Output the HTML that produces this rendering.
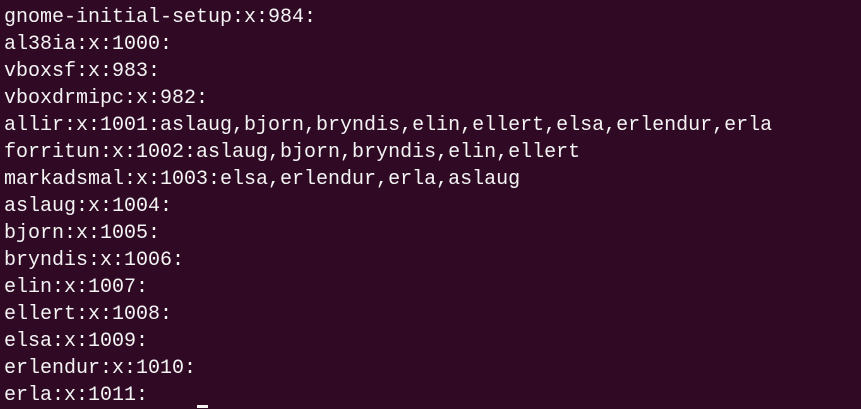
<html><head><style>
body{margin:0;width:861px;height:408px;background:#300a24;overflow:hidden}
pre{margin:0;padding:4px 0 0 4px;font-family:"Liberation Mono",monospace;font-size:20px;line-height:27px;color:#f4f4f4}
.c{position:absolute;left:197px;top:405px;width:11px;height:3px;background:#f4f4f4}
</style></head><body><pre>gnome-initial-setup:x:984:
al38ia:x:1000:
vboxsf:x:983:
vboxdrmipc:x:982:
allir:x:1001:aslaug,bjorn,bryndis,elin,ellert,elsa,erlendur,erla
forritun:x:1002:aslaug,bjorn,bryndis,elin,ellert
markadsmal:x:1003:elsa,erlendur,erla,aslaug
aslaug:x:1004:
bjorn:x:1005:
bryndis:x:1006:
elin:x:1007:
ellert:x:1008:
elsa:x:1009:
erlendur:x:1010:
erla:x:1011:</pre><div class="c"></div></body></html>
